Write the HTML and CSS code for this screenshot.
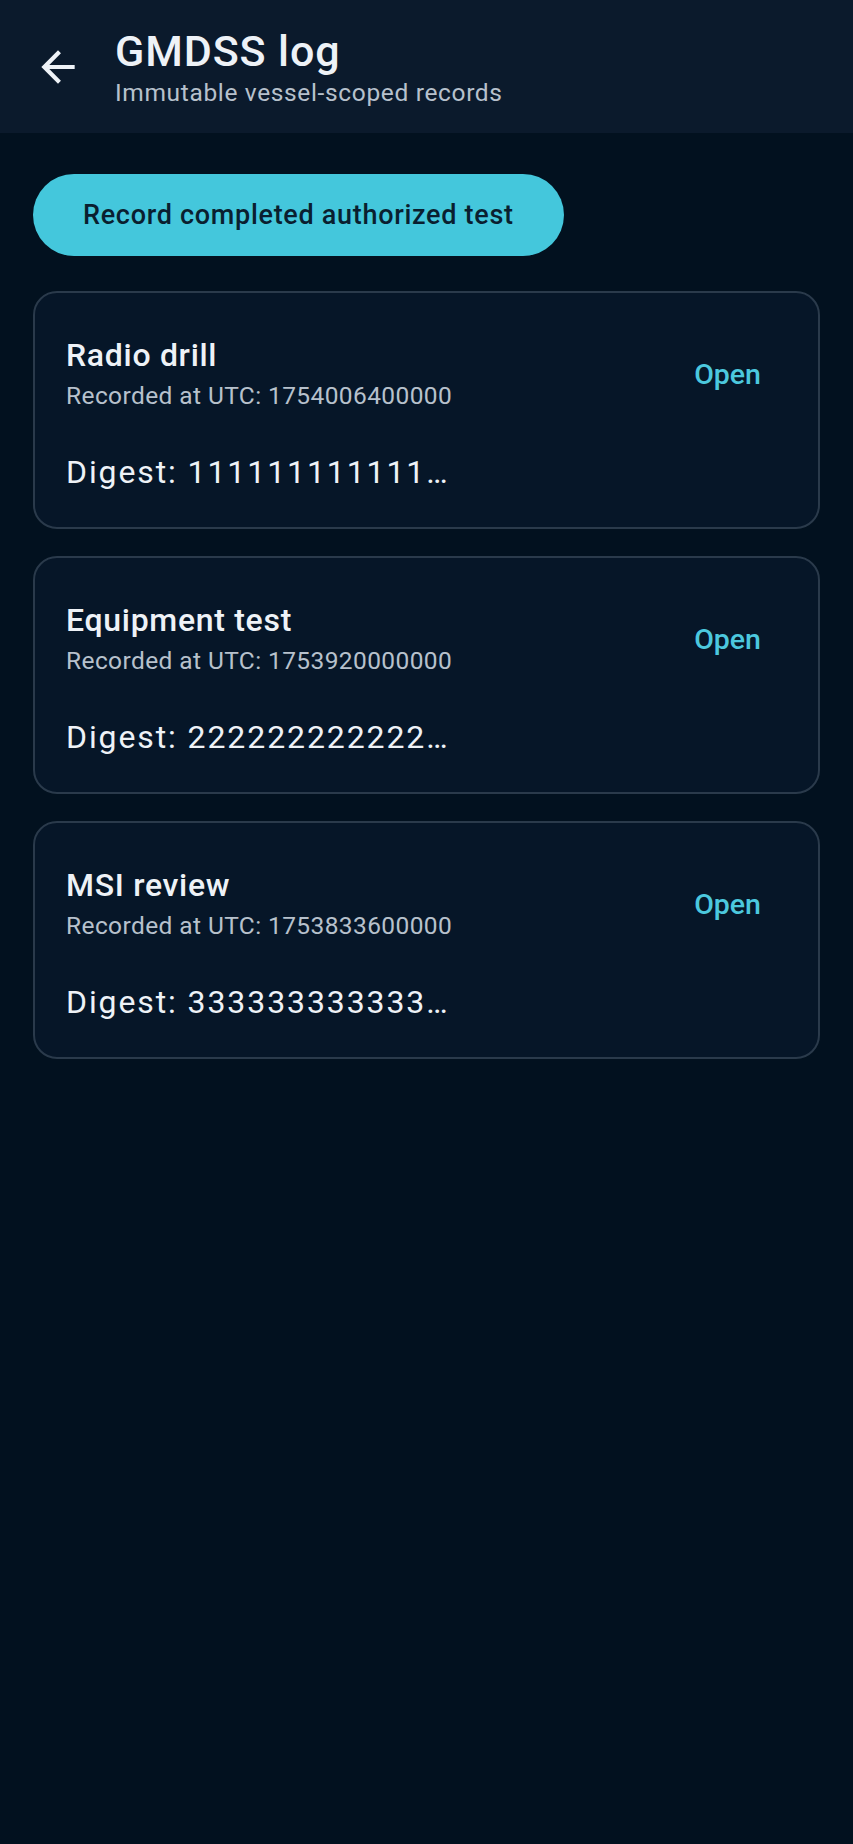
FILE: index.html
```html
<!DOCTYPE html>
<html lang="en">
<head>
    <meta charset="UTF-8">
    <meta name="viewport" content="width=device-width, initial-scale=1.0">
    <title>GMDSS log</title>
    <link rel="stylesheet" href="styles.css">
</head>
<body>
    <header class="topbar">
        <button class="back-button" aria-label="Back">
            <svg viewBox="0 0 24 24" width="50" height="50">
                <path d="M20 11H7.83l5.59-5.59L12 4l-8 8 8 8 1.41-1.41L7.83 13H20v-2z" fill="currentColor"/>
            </svg>
        </button>
        <div class="titles">
            <h1>GMDSS log</h1>
            <p>Immutable vessel-scoped records</p>
        </div>
    </header>

    <main class="content">
        <button class="primary-button">Record completed authorized test</button>

        <ul class="log-list">
            <li class="log-card">
                <div class="log-head">
                    <div class="log-info">
                        <h2>Radio drill</h2>
                        <p class="log-time">Recorded at UTC: 1754006400000</p>
                    </div>
                    <button class="text-button">Open</button>
                </div>
                <p class="log-digest">Digest: 111111111111…</p>
            </li>
            <li class="log-card">
                <div class="log-head">
                    <div class="log-info">
                        <h2>Equipment test</h2>
                        <p class="log-time">Recorded at UTC: 1753920000000</p>
                    </div>
                    <button class="text-button">Open</button>
                </div>
                <p class="log-digest">Digest: 222222222222…</p>
            </li>
            <li class="log-card">
                <div class="log-head">
                    <div class="log-info">
                        <h2>MSI review</h2>
                        <p class="log-time">Recorded at UTC: 1753833600000</p>
                    </div>
                    <button class="text-button">Open</button>
                </div>
                <p class="log-digest">Digest: 333333333333…</p>
            </li>
        </ul>
    </main>
</body>
</html>
```

FILE: styles.css
```css
body {
    font-family: Roboto, "Noto Sans", Arial, sans-serif;
    background-color: #02111f;
    color: #eef2f7;
    margin: 0;
    min-height: 100vh;
}
button {
    font-family: inherit;
    cursor: pointer;
}
/* Barra superior */
.topbar {
    display: flex;
    align-items: center;
    height: 133px;
    padding-left: 8px;
    background-color: #0b1a2c;
}
.back-button {
    width: 100px;
    height: 100px;
    display: flex;
    align-items: center;
    justify-content: center;
    background: none;
    border: none;
    color: #eef2f7;
    padding: 0;
}
.titles {
    margin-left: 7px;
}
.titles h1 {
    margin: 0;
    font-size: 43px;
    line-height: 52px;
    font-weight: 500;
    letter-spacing: 0.9px;
    color: #eef2f7;
}
.titles p {
    margin: 0;
    font-size: 24.5px;
    line-height: 31px;
    color: #b7c1cc;
    letter-spacing: 0.65px;
}
/* Conteúdo */
.content {
    display: flex;
    flex-direction: column;
    align-items: flex-start;
    padding: 41px 33px;
}
.primary-button {
    height: 82px;
    padding: 0 50px;
    border: none;
    border-radius: 41px;
    background-color: #44c7dc;
    color: #0a1f30;
    font-size: 27px;
    font-weight: 500;
    letter-spacing: 0.7px;
    margin-bottom: 35px;
}
.log-list {
    list-style: none;
    margin: 0;
    padding: 0;
    width: 100%;
    display: flex;
    flex-direction: column;
    gap: 27px;
}
.log-card {
    background-color: #061628;
    border: 2px solid #2a3a4b;
    border-radius: 24px;
    padding: 31px 31px 30px;
}
.log-head {
    display: flex;
    align-items: center;
    justify-content: space-between;
    min-height: 100px;
}
.log-info h2 {
    margin: 0;
    font-size: 32px;
    line-height: 44px;
    font-weight: 500;
    letter-spacing: 0.7px;
    color: #eef2f7;
}
.log-time {
    margin: 0;
    font-size: 24.5px;
    line-height: 38px;
    color: #b7c1cc;
    letter-spacing: 0.4px;
}
.text-button {
    background: none;
    border: none;
    color: #4cc8de;
    font-size: 28.5px;
    font-weight: 500;
    padding: 0 26px;
    height: 84px;
}
.log-digest {
    margin: 23px 0 0;
    font-size: 32px;
    line-height: 50px;
    letter-spacing: 1.9px;
    color: #eef2f7;
}
```
